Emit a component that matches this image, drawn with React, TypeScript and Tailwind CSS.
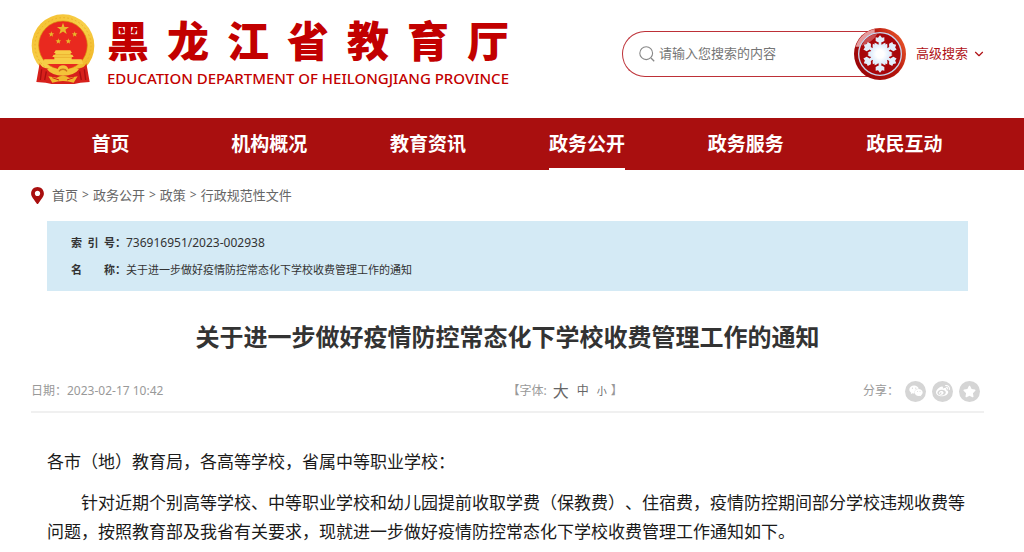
import React, { useState } from 'react';
import { FaMapMarkerAlt, FaStar, FaWeibo, FaWeixin } from 'react-icons/fa';
import { FiChevronDown } from 'react-icons/fi';

const NAV_ITEMS = ['首页', '机构概况', '教育资讯', '政务公开', '政务服务', '政民互动'];
const CRUMBS = ['首页', '政务公开', '政策', '行政规范性文件'];
const SITE_NAME = ['黑', '龙', '江', '省', '教', '育', '厅'];
const TITLE = '关于进一步做好疫情防控常态化下学校收费管理工作的通知';

const starPoints = (cx: number, cy: number, r: number) =>
  Array.from({ length: 10 }, (_, i) => {
    const radius = i % 2 === 0 ? r : r * 0.4;
    const angle = (Math.PI / 5) * i - Math.PI / 2;
    return `${cx + radius * Math.cos(angle)},${cy + radius * Math.sin(angle)}`;
  }).join(' ');

const Emblem = () => (
  <svg viewBox="0 0 192 210" className="h-[70px] w-16 shrink-0" aria-hidden="true">
    <defs>
      <linearGradient id="gold" x1="0" y1="0" x2="1" y2="1">
        <stop offset="0" stopColor="#f3bd2c" />
        <stop offset="0.5" stopColor="#f8d04a" />
        <stop offset="1" stopColor="#efb01d" />
      </linearGradient>
    </defs>
    <circle cx="96" cy="95" r="94" fill="url(#gold)" />
    <circle cx="96" cy="95" r="84" fill="none" stroke="#ebb028" strokeWidth="3" strokeDasharray="5 7" />
    <circle cx="96" cy="94" r="73" fill="#e9291f" stroke="#d9930f" strokeWidth="2" />
    <g fill="#e8b92c">
      <polygon points={starPoints(96, 45, 19)} />
      <polygon points={starPoints(61, 61, 9)} />
      <polygon points={starPoints(131, 61, 9)} />
      <polygon points={starPoints(82, 82, 9)} />
      <polygon points={starPoints(112, 82, 9)} />
    </g>
    <g fill="#f7cd45">
      <path d="M74 109h44l5 8h-4v5h5l4 7h-6v7h30l4 14H36l4-14h30v-7h-6l4-7h5v-5h-4z" />
    </g>
    <path d="M73 122h46M69 130h54" stroke="#e5a526" strokeWidth="2" />
    <path d="M26 148q4 14 26 16l44 16 44-16q22-2 26-16l10 56-28 2-18 4H62l-18-4-28-2z" fill="#d7201b" />
    <path d="M32 166l-4 32M46 172l-5 26M160 166l4 32M146 172l5 26" stroke="#a80f10" strokeWidth="4" />
    <path d="M48 166q20-6 32 0 3-12 16-12t16 12q12-6 32 0-14 19-48 19t-48-19z" fill="#f4c33a" />
    <path d="M84 172a13 10 0 0 1 24 0" fill="none" stroke="#cf761a" strokeWidth="4" />
    <path d="M52 187l25 4q19-11 38 0l25-4-12 19q-32-10-64 0z" fill="#efb82f" />
    <path d="M64 191l20 7M128 191l-20 7" stroke="#d7201b" strokeWidth="3" />
  </svg>
);

const Snowflake = () => (
  <svg viewBox="0 0 156 156" className="size-[52px]" aria-hidden="true">
    <defs>
      <linearGradient id="ring" x1="0" y1="0.8" x2="1" y2="0.2">
        <stop offset="0" stopColor="#970308" />
        <stop offset="0.6" stopColor="#b5150d" />
        <stop offset="1" stopColor="#ed5a2c" />
      </linearGradient>
      <radialGradient id="core">
        <stop offset="0.4" stopColor="#ffffff" />
        <stop offset="1" stopColor="#dfecfb" />
      </radialGradient>
    </defs>
    <circle cx="78" cy="78" r="78" fill="url(#ring)" />
    <path d="M5 56A77 77 0 0 1 62 3v12A66 66 0 0 0 17 56z" fill="#e59a9c" />
    <circle cx="78" cy="78" r="64" fill="#a8060a" stroke="#c8d7ee" strokeWidth="4" />
    <path d="M22 54A61 61 0 0 1 70 17q-12 24-48 37z" fill="#c94d50" />
    {[0, 60, 120, 180, 240, 300].map((angle) => (
      <g key={angle} transform={`rotate(${angle} 78 78)`} fill="#e2eefb">
        <rect x="74" y="30" width="8" height="48" />
        <path d="M78 22l6 7 7-1v11l-7 4H72l-7-4V28l7 1z" />
        <path d="M62 44l7 3 9 10 9-10 7-3 1 10-12 17H73L61 54z" />
      </g>
    ))}
    <circle cx="78" cy="78" r="29" fill="url(#core)" />
  </svg>
);

const SearchIcon = () => (
  <svg viewBox="0 0 16 16" className="size-4 shrink-0" fill="none" stroke="#888" aria-hidden="true">
    <circle cx="7.2" cy="7.2" r="6.4" strokeWidth="1.1" />
    <path d="M12 12l3.2 3.2" strokeWidth="1.3" />
  </svg>
);

const Header = () => (
  <header className="flex items-start justify-between pt-3.5 pr-[38px] pb-7 pl-[31px]">
    <a href="#" className="flex text-[#c20000]">
      <Emblem />
      <div className="ml-3">
        <div className="flex gap-[18px] pt-0.5 text-[42px] leading-[50px] font-black">
          {SITE_NAME.map((char) => (
            <span key={char}>{char}</span>
          ))}
        </div>
        <div className="text-[15px] leading-6 font-medium">EDUCATION DEPARTMENT OF HEILONGJIANG PROVINCE</div>
      </div>
    </a>
    <div className="flex items-center pt-3.5 text-[13px]">
      <form className="relative flex items-center">
        <div className="flex h-[46px] w-[258px] items-center gap-1 rounded-l-full border border-r-0 border-[#bd3037] pl-4">
          <SearchIcon />
          <input
            type="text"
            aria-label="搜索"
            placeholder="请输入您搜索的内容"
            className="w-44 placeholder:text-[#757575] focus:outline-none"
          />
        </div>
        <button type="button" aria-label="提交搜索" className="-ml-[26px]">
          <Snowflake />
        </button>
      </form>
      <button type="button" className="ml-2.5 flex items-center gap-1 text-[#b01116]">
        高级搜索
        <FiChevronDown size={14} />
      </button>
    </div>
  </header>
);

const FontSizePicker = ({ onChange }: { onChange: (size: string) => void }) => (
  <div className="flex items-center">
    <span>【字体:</span>
    <button type="button" className="ml-1.5 text-base text-[#666]" onClick={() => onChange('text-xl')}>大</button>
    <button type="button" className="ml-2 text-xs text-[#666]" onClick={() => onChange('text-[17px]')}>中</button>
    <button type="button" className="mr-1 ml-2 text-[10px] text-[#666]" onClick={() => onChange('text-sm')}>小</button>
    <span>】</span>
  </div>
);

const shareClass = 'flex size-[21px] items-center justify-center rounded-full bg-[#d5d5d5] text-white';

export default function App() {
  const [fontSize, setFontSize] = useState('text-[17px]');

  return (
    <div className="bg-white font-['Noto_Sans','Noto_Sans_CJK_SC',sans-serif] [text-spacing-trim:space-all]" lang="zh-CN">
      <Header />

      <nav className="bg-[#a90f0f] pr-10 pl-[31px]">
        <ul className="grid grid-cols-6 text-[19px] font-bold text-white">
          {NAV_ITEMS.map((item) => (
            <li key={item} className="flex justify-center">
              <a
                href="#"
                className={`border-b-2 pt-0.5 leading-[48px] ${item === '政务公开' ? 'border-white' : 'border-transparent'}`}
              >
                {item}
              </a>
            </li>
          ))}
        </ul>
      </nav>

      <div className="flex items-center pt-[15px] pr-10 pl-[31px] text-[13px] leading-5 text-[#666]">
        <FaMapMarkerAlt size={17} className="-ml-0.5 mr-1.5 text-[#a90f0f]" />
        {CRUMBS.map((crumb, i) => (
          <React.Fragment key={crumb}>
            {i > 0 && <span className="mx-1 text-xs">&gt;</span>}
            <a href="#">{crumb}</a>
          </React.Fragment>
        ))}
      </div>

      <main className="pr-10 pl-[31px]">
        <dl className="mx-4 mt-4 bg-[#d4eaf5] px-6 py-2 text-[11px] leading-[27px] text-[#333]">
          <div className="flex">
            <dt className="flex w-[55px] font-bold">
              <span className="flex w-[45px] justify-between"><span>索</span><span>引</span><span>号</span></span>：
            </dt>
            <dd className="text-xs leading-[27px]">736916951/2023-002938</dd>
          </div>
          <div className="flex">
            <dt className="flex w-[55px] font-bold">
              <span className="flex w-[45px] justify-between"><span>名</span><span>称</span></span>：
            </dt>
            <dd>{TITLE}</dd>
          </div>
        </dl>

        <h1 className="mt-7 text-center text-2xl leading-9 font-bold text-[#333]">{TITLE}</h1>

        <div className="mt-5 flex items-center border-b-2 border-[#f0f0f0] pt-1 pb-2 text-xs leading-6 text-[#999]">
          <time dateTime="2023-02-17T10:42" className="w-1/2">日期：2023-02-17 10:42</time>
          <FontSizePicker onChange={setFontSize} />
          <div className="ml-auto flex items-center gap-1.5 pr-1">
            <span>分享：</span>
            <a href="#" aria-label="微信" className={shareClass}><FaWeixin size={14} /></a>
            <a href="#" aria-label="微博" className={shareClass}><FaWeibo size={14} /></a>
            <a href="#" aria-label="收藏" className={shareClass}><FaStar size={13} /></a>
          </div>
        </div>

        <article className={`mx-4 pt-[34px] leading-[29px] text-[#1a1a1a] ${fontSize}`}>
          <p>各市（地）教育局，各高等学校，省属中等职业学校：</p>
          <p className="mt-3 indent-[2em]">
            针对近期个别高等学校、中等职业学校和幼儿园提前收取学费（保教费）、住宿费，疫情防控期间部分学校违规收费等问题，按照教育部及我省有关要求，现就进一步做好疫情防控常态化下学校收费管理工作通知如下。
          </p>
        </article>
      </main>
    </div>
  );
}
